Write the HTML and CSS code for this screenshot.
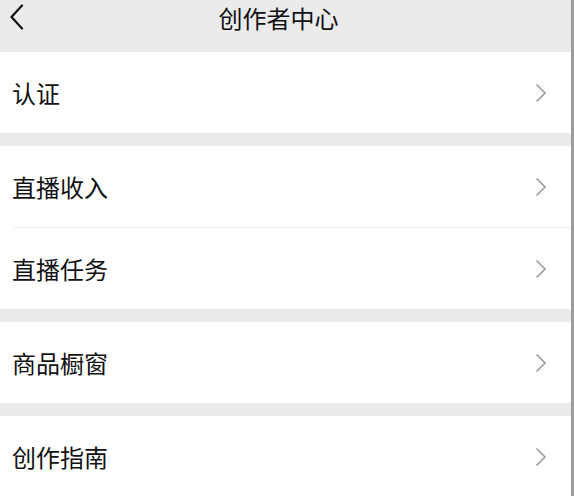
FILE: index.html
```html
<!DOCTYPE html>
<html lang="zh">
<head>
<meta charset="utf-8">
<link rel="stylesheet" href="styles.css">
</head>
<body>
<div class="page">
  <header class="header">
    <svg class="back" width="16" height="26" viewBox="0 0 16 26"><path d="M13 1.5 L2.5 13 L13 24.5" fill="none" stroke="#111" stroke-width="2.2" stroke-linecap="round" stroke-linejoin="round"/></svg>
    <h1 class="title">创作者中心</h1>
  </header>
  <section class="group">
    <div class="row"><span class="label">认证</span><svg class="chev" width="12" height="20" viewBox="0 0 12 20"><path d="M1.5 1.5 L10 10 L1.5 18.5" fill="none" stroke="#9a9a9a" stroke-width="1.6"/></svg></div>
  </section>
  <section class="group">
    <div class="row"><span class="label">直播收入</span><svg class="chev" width="12" height="20" viewBox="0 0 12 20"><path d="M1.5 1.5 L10 10 L1.5 18.5" fill="none" stroke="#9a9a9a" stroke-width="1.6"/></svg></div>
    <div class="divider"></div>
    <div class="row"><span class="label">直播任务</span><svg class="chev" width="12" height="20" viewBox="0 0 12 20"><path d="M1.5 1.5 L10 10 L1.5 18.5" fill="none" stroke="#9a9a9a" stroke-width="1.6"/></svg></div>
  </section>
  <section class="group">
    <div class="row"><span class="label">商品橱窗</span><svg class="chev" width="12" height="20" viewBox="0 0 12 20"><path d="M1.5 1.5 L10 10 L1.5 18.5" fill="none" stroke="#9a9a9a" stroke-width="1.6"/></svg></div>
  </section>
  <section class="group">
    <div class="row"><span class="label">创作指南</span><svg class="chev" width="12" height="20" viewBox="0 0 12 20"><path d="M1.5 1.5 L10 10 L1.5 18.5" fill="none" stroke="#9a9a9a" stroke-width="1.6"/></svg></div>
  </section>
</div>
</body>
</html>
```
FILE: styles.css
```css
* { box-sizing: border-box; }
html, body { margin: 0; padding: 0; }
body {
  width: 574px;
  height: 496px;
  overflow: hidden;
  background: #ebebeb;
  font-family: "Noto Sans CJK SC", "Noto Sans", sans-serif;
  color: #111;
}
.page {
  width: 574px;
  height: 496px;
  border-right: 3px solid #9c9c9c;
  display: flex;
  flex-direction: column;
  gap: 13px;
}
.header {
  height: 52px;
  flex: none;
  margin-bottom: -13px;
  display: flex;
  align-items: flex-start;
  position: relative;
  background: #ebebeb;
}
.back {
  position: absolute;
  left: 9px;
  top: 4px;
}
.title {
  margin: 0;
  width: 100%;
  padding-right: 14px;
  text-align: center;
  font-size: 24px;
  font-weight: 400;
  line-height: 36px;
}
.group {
  background: #fff;
  display: flex;
  flex-direction: column;
  flex: none;
}
.row {
  height: 81px;
  display: flex;
  align-items: center;
  justify-content: space-between;
  padding: 0 24px 0 12px;
}
.label {
  font-size: 24px;
  line-height: 32px;
}
.chev { margin-top: 0; }
.divider {
  height: 1px;
  margin-left: 14px;
  background: #ececec;
}
```
